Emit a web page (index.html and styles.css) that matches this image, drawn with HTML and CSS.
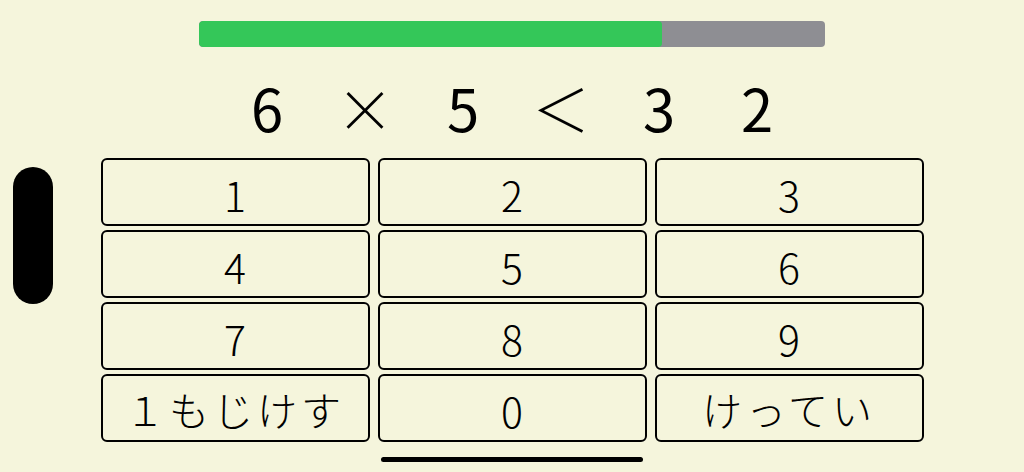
FILE: index.html
```html
<!DOCTYPE html>
<html lang="ja">
<head>
<meta charset="utf-8">
<title>かけざん</title>
<link rel="stylesheet" href="styles.css">
</head>
<body>
<div class="pill"></div>
<main class="app">
  <div class="progress"><div class="progress-fill" style="width:74%"></div></div>
  <div class="equation">
    <span class="eq-cell">6</span>
    <span class="eq-cell eq-op">×</span>
    <span class="eq-cell">5</span>
    <span class="eq-cell eq-op">＜</span>
    <span class="eq-cell">3</span>
    <span class="eq-cell">2</span>
  </div>
  <div class="keypad">
    <button class="key">1</button>
    <button class="key">2</button>
    <button class="key">3</button>
    <button class="key">4</button>
    <button class="key">5</button>
    <button class="key">6</button>
    <button class="key">7</button>
    <button class="key">8</button>
    <button class="key">9</button>
    <button class="key key-jp">１もじけす</button>
    <button class="key">0</button>
    <button class="key key-jp">けってい</button>
  </div>
</main>
<div class="home-indicator"></div>
</body>
</html>
```

FILE: styles.css
```css
html, body {
  margin: 0;
  padding: 0;
}
body {
  width: 1024px;
  height: 472px;
  background: #f5f5dc;
  font-family: "Noto Sans CJK JP", "Noto Sans", sans-serif;
  color: #000;
  overflow: hidden;
  position: relative;
}
.app {
  display: flex;
  flex-direction: column;
  align-items: center;
}
.progress {
  margin-top: 21px;
  width: 626px;
  height: 26px;
  border-radius: 4px;
  background: #8e8e93;
  overflow: hidden;
}
.progress-fill {
  height: 100%;
  background: #34c759;
  border-radius: 4px;
}
.equation {
  margin-top: 14px;
  height: 92px;
  display: flex;
  align-items: center;
}
.eq-cell {
  width: 98px;
  text-align: center;
  font-size: 58px;
  font-weight: 400;
  line-height: 1;
}
.eq-op {
  font-weight: 300;
}
.keypad {
  margin-top: 5px;
  display: grid;
  grid-template-columns: repeat(3, 269px);
  grid-auto-rows: 68px;
  column-gap: 8px;
  row-gap: 4px;
}
.key {
  border: 2px solid #000;
  border-radius: 6px;
  background: transparent;
  font-family: "Noto Sans CJK JP", "Noto Sans", sans-serif;
  font-size: 41px;
  font-weight: 300;
  color: #000;
  padding: 5px 0 0;
  margin: 0;
  line-height: 1;
}
.key-jp {
  font-size: 40px;
  letter-spacing: 4px;
  padding-top: 1px;
}
.pill {
  position: absolute;
  left: 13px;
  top: 167px;
  width: 40px;
  height: 137px;
  border-radius: 20px;
  background: #000;
}
.home-indicator {
  position: absolute;
  left: 381px;
  top: 457px;
  width: 262px;
  height: 5px;
  border-radius: 3px;
  background: #000;
}
```
